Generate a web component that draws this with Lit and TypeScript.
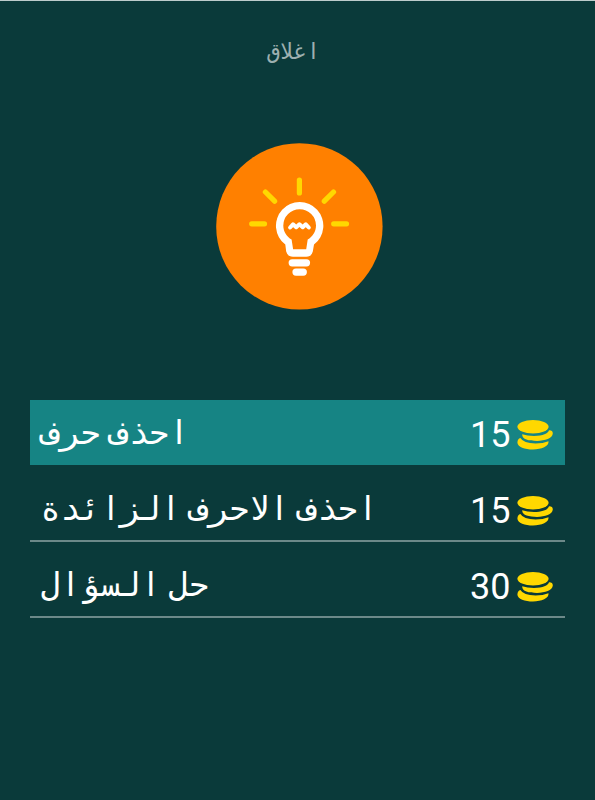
import { LitElement, html, css } from "lit";
import { customElement, property } from "lit/decorators.js";

@customElement("coin-stack")
class CoinStack extends LitElement {
  static styles = css`
    :host { display: block; width: 36px; height: 30px; }
    svg { display: block; }
  `;
  render() {
    return html`<svg width="36" height="30" viewBox="0 0 36 30" fill="#ffd800">
      <ellipse cx="16" cy="6.8" rx="15.6" ry="6.7" />
      <path d="M5.2 14.2 Q10 16 17 16 C26 15.8 31 13.8 32 10.3 Q35.8 10.2 35.8 13.6 C35.4 18.4 28 20.9 20 20.9 C12 20.9 4.8 19.4 5.2 14.2Z" />
      <path d="M3.4 18 Q6.4 23.2 18.5 23.4 Q26 23.4 31.5 21.2 C32.2 26.2 24.5 29.4 16 29.4 C8 29.4 .4 26.8 .4 22.4 Q.6 18.8 3.4 18Z" />
    </svg>`;
  }
}

@customElement("hint-bulb")
class HintBulb extends LitElement {
  static styles = css`
    :host { display: block; width: 168px; height: 168px; }
    svg { display: block; }
  `;
  render() {
    return html`<svg width="168" height="168" viewBox="215 142 168 168" fill="none" stroke-linecap="round" stroke-linejoin="round">
      <circle cx="299.4" cy="226.4" r="83.2" fill="#ff8000" />
      <path stroke="#ffd800" stroke-width="5.2" d="M299.4 180v13M265.4 192l9.2 9.2M333.5 192l-9.2 9.2M251.7 223.8h12.8M333.7 223.8h12.8" />
      <path fill="#fff" fill-rule="evenodd" d="M285.3 244.6A23.7 23.7 0 1 1 314 244.6L312.8 251.5Q311.6 256.8 306.3 256.8H293Q287.5 256.8 286.2 251.5ZM291.6 239.6L293.1 249.2H306.2L307.7 239.6C312.5 237 316 231.8 316 225.6A16.35 16.35 0 0 0 283.3 225.6C283.3 231.8 286.8 237 291.6 239.6Z" />
      <path stroke="#fff" stroke-width="4" d="M290.1 227.5L293 224.3L296.2 227.2L299.4 224.3L302.7 227.2L305.8 224.3L308.8 227.5" />
      <path stroke="#fff" stroke-width="7.2" d="M292.2 262.8h14.3M296 272.1h7.3" />
    </svg>`;
  }
}

@customElement("hint-row")
class HintRow extends LitElement {
  @property() label = "";
  @property({ type: Number }) price = 0;

  static styles = css`
    :host { display: flex; justify-content: space-between; align-items: center; box-sizing: border-box; color: #fff; }
    .label { font-size: 33.3px; line-height: 40px; white-space: nowrap; }
    .price { display: flex; align-items: center; gap: 6px; padding: var(--price-drop, 0) 12px 0 0; font-size: 36px; line-height: 42px; }
    .amount { margin-top: 3px; }
    .coins { margin-top: 3px; }
  `;
  render() {
    return html`<span class="label" dir="rtl">${this.label}</span>
      <span class="price"><span class="amount">${this.price}</span><coin-stack class="coins"></coin-stack></span>`;
  }
}

@customElement("app-root")
class AppRoot extends LitElement {
  static styles = css`
    :host {
      display: flex; flex-direction: column; align-items: center; box-sizing: border-box;
      width: 595px; height: 800px; overflow: hidden; background: #0a3a3a;
      border-top: 1px solid #bdcccc;
      font-family: Roboto, "DejaVu Sans Mono", monospace;
    }
    .close { height: 26px; margin-top: 38px; padding-right: 8px; font-size: 22px; line-height: 26px; color: #9db0b0; }
    .bulb { margin: 77px 0 0 3px; }
    .list { width: 535px; margin: 90px 1px 0 0; }
    .row { height: 76px; padding: 12px 0 0 11px; border-bottom: 2px solid #6c8989; }
    .row.selected { --price-drop: 2px; height: 65px; padding: 0 0 0 11px; background: #168484; border: 0; margin-bottom: 1px; }
  `;
  render() {
    return html`
      <div class="close" dir="rtl">اغلاق</div>
      <hint-bulb class="bulb"></hint-bulb>
      <div class="list">
        <hint-row class="row selected" label="احذف حرف" price="15"></hint-row>
        <hint-row class="row" label="احذف الاحرف الزائدة" price="15"></hint-row>
        <hint-row class="row" label="حل السؤال" price="30"></hint-row>
      </div>`;
  }
}
